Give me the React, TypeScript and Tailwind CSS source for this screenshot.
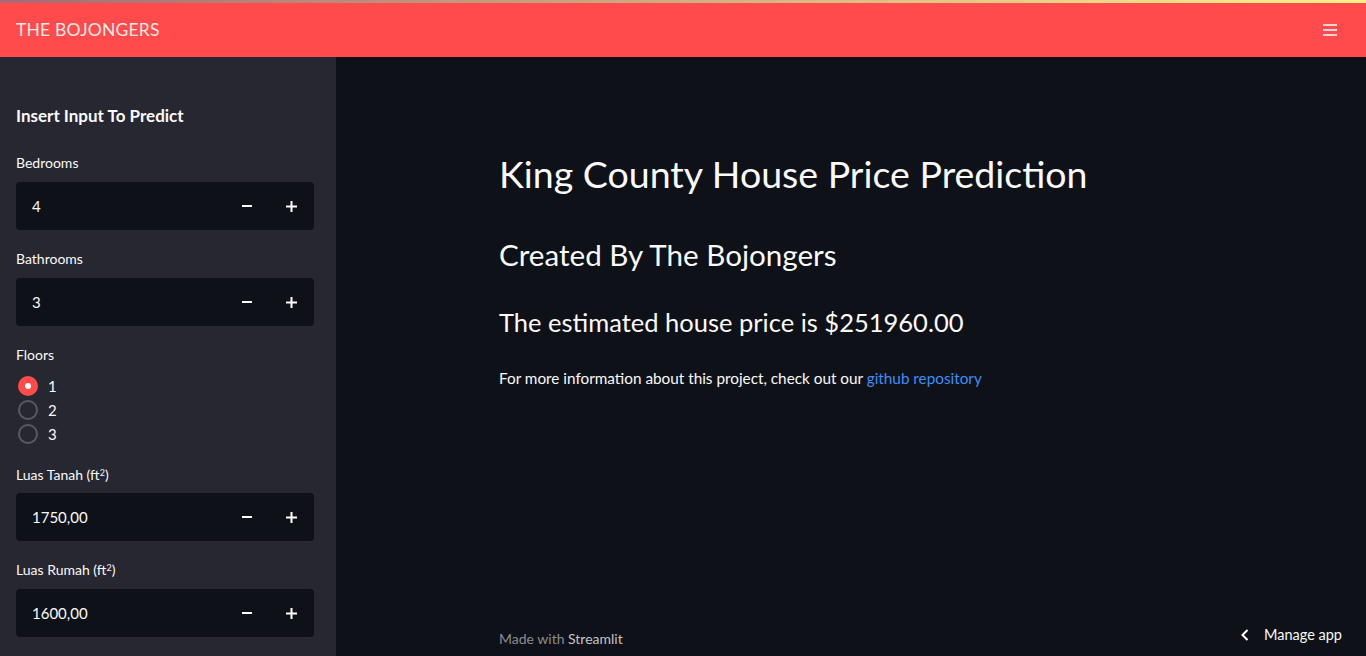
import React from "react";

const font = { fontFamily: '"Source Sans Pro", Lato, "Noto Sans", sans-serif' };

function NumberInput({ value }: { value: string }) {
  return (
    <div className="flex h-12 w-[298px] rounded-[4px] bg-[#0e1117]">
      <div className="flex flex-1 items-center pl-4 text-[15px] text-[#fafafa]">{value}</div>
      <button className="flex w-[45px] items-center justify-center">
        <span className="block h-[2px] w-[10px] bg-white" />
      </button>
      <button className="flex w-[45px] items-center justify-center">
        <svg width="11" height="11" viewBox="0 0 11 11">
          <rect x="4.5" y="0" width="2" height="11" fill="white" />
          <rect x="0" y="4.5" width="11" height="2" fill="white" />
        </svg>
      </button>
    </div>
  );
}

function Radio({ label, checked }: { label: string; checked?: boolean }) {
  return (
    <div className="flex h-6 items-center gap-[10px]">
      {checked ? (
        <span className="flex h-5 w-5 items-center justify-center rounded-full bg-[#ff4b4b]">
          <span className="h-[6px] w-[6px] rounded-full bg-white" />
        </span>
      ) : (
        <span className="h-5 w-5 rounded-full border-2 border-[#585a62]" />
      )}
      <span className="text-[15px] text-[#fafafa]">{label}</span>
    </div>
  );
}

export default function App() {
  return (
    <div className="flex h-[656px] w-[1366px] flex-col overflow-hidden bg-[#0e1117]" style={font}>
      <div className="h-[3px] w-full bg-gradient-to-r from-[#a56a72] to-[#fdf18a]" />
      <header className="flex h-[54px] items-center justify-between bg-[#ff4b4b] pl-4 pr-[29px]">
        <span className="text-[17.5px] tracking-[0.2px] text-[#fde9e9]">THE BOJONGERS</span>
        <div className="flex w-[14px] flex-col gap-[3px]">
          <span className="h-[2px] w-full bg-[#fbd2d2]" />
          <span className="h-[2px] w-full bg-[#fbd2d2]" />
          <span className="h-[2px] w-full bg-[#fbd2d2]" />
        </div>
      </header>
      <div className="flex flex-1">
        <aside className="flex w-[336px] flex-col bg-[#262730] px-4 pt-[45px]">
          <h2 className="text-[17px] font-bold leading-[28px] text-[#fafafa]">Insert Input To Predict</h2>
          <div className="mt-[23px] text-[14px] leading-[19px] text-[#fafafa]">Bedrooms</div>
          <div className="mt-[10px]"><NumberInput value="4" /></div>
          <div className="mt-[19px] text-[14px] leading-[19px] text-[#fafafa]">Bathrooms</div>
          <div className="mt-[10px]"><NumberInput value="3" /></div>
          <div className="mt-[19px] text-[14px] leading-[19px] text-[#fafafa]">Floors</div>
          <div className="mt-[10px] flex flex-col pl-[2px]">
            <Radio label="1" checked />
            <Radio label="2" />
            <Radio label="3" />
          </div>
          <div className="mt-[19px] text-[14px] leading-[19px] text-[#fafafa]">
            Luas Tanah (ft<sup className="text-[9px]">2</sup>)
          </div>
          <div className="mt-[9px]"><NumberInput value="1750,00" /></div>
          <div className="mt-[19px] text-[14px] leading-[19px] text-[#fafafa]">
            Luas Rumah (ft<sup className="text-[9px]">2</sup>)
          </div>
          <div className="mt-[10px]"><NumberInput value="1600,00" /></div>
        </aside>
        <main className="relative flex flex-1 flex-col items-center">
          <div className="w-[704px] pt-[91px] text-[#fafafa]">
            <h1 className="text-[37.5px] leading-[52px]">King County House Price Prediction</h1>
            <h2 className="mt-[35px] text-[29.6px] leading-[40px]">Created By The Bojongers</h2>
            <h3 className="mt-[30px] text-[25.5px] leading-[34px]">The estimated house price is $251960.00</h3>
            <p className="mt-[27px] text-[15.3px] leading-[24px]">
              For more information about this project, check out our{" "}
              <a className="text-[#3d8ef8]">github repository</a>
            </p>
          </div>
          <div className="absolute bottom-[7px] left-[163px] text-[14px] text-[#8b8d93]">
            Made with <span className="text-[#c4c5c8]">Streamlit</span>
          </div>
          <div className="absolute bottom-[10px] right-[24px] flex items-center gap-[14px] text-[14.5px] text-[#fafafa]">
            <svg width="10" height="14" viewBox="0 0 10 14">
              <path d="M7.5 2 L2.5 7 L7.5 12" stroke="white" strokeWidth="2" fill="none" />
            </svg>
            <span>Manage app</span>
          </div>
        </main>
      </div>
    </div>
  );
}
